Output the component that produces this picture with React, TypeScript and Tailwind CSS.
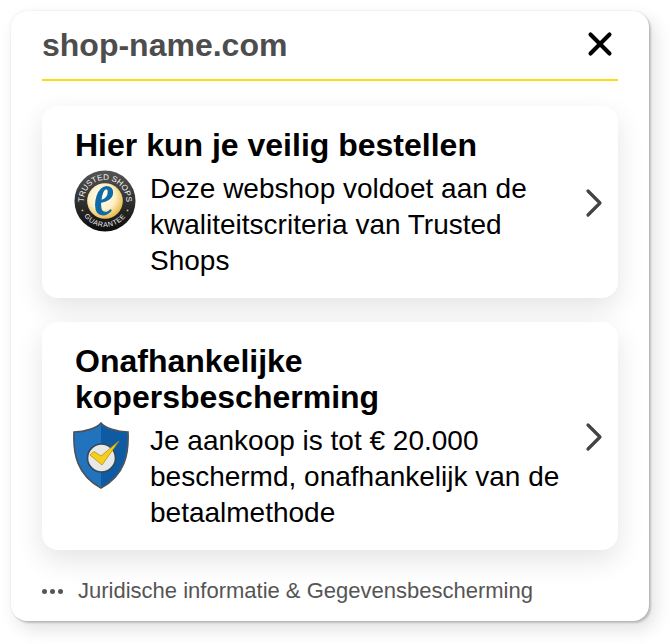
import { ChevronRight, X } from 'lucide-react'

function TrustedBadge() {
  return (
    <svg width="62" height="62" viewBox="0 0 66 66" className="ml-[1px] shrink-0">
      <defs>
        <radialGradient id="tsGold" cx="42%" cy="38%" r="68%">
          <stop offset="0%" stopColor="#ffffff" />
          <stop offset="55%" stopColor="#fdf0c4" />
          <stop offset="100%" stopColor="#e6ac30" />
        </radialGradient>
        <linearGradient id="tsRing" x1="0" y1="0" x2="0" y2="1">
          <stop offset="0%" stopColor="#555555" />
          <stop offset="100%" stopColor="#0c0c0c" />
        </linearGradient>
        <path id="tsTop" d="M 33 55.5 A 22.5 22.5 0 1 1 33.01 55.5" />
        <path id="tsBottom" d="M 33 5.5 A 27.5 27.5 0 1 0 33.01 5.5" />
      </defs>
      <circle cx="33" cy="33" r="32.5" fill="url(#tsRing)" />
      <circle cx="33" cy="33" r="19" fill="url(#tsGold)" />
      <text fill="#f4f4f4" fontSize="8.6" className="font-['Liberation_Sans',sans-serif]">
        <textPath href="#tsTop" startOffset="50%" textAnchor="middle">TRUSTED SHOPS</textPath>
      </text>
      <text fill="#f0f0f0" fontSize="7.4" letterSpacing="0.6" className="font-['Liberation_Sans',sans-serif]">
        <textPath href="#tsBottom" startOffset="50%" textAnchor="middle">GUARANTEE</textPath>
      </text>
      <circle cx="9" cy="43" r="1" fill="#e6c060" />
      <circle cx="57" cy="43" r="1" fill="#e6c060" />
      <text transform="translate(32 48) scale(1.1 1.5)" textAnchor="middle" fill="#0f6aa8" fontSize="44" fontStyle="italic" fontWeight="700" className="font-['Liberation_Serif',serif]">e</text>
    </svg>
  )
}

function ShieldBadge() {
  return (
    <svg width="56" height="67" viewBox="0 0 56 67" className="shrink-0">
      <path d="M28 1 C32 6 44 10 55 10 C56 32 52 53 28 66 C4 53 0 32 1 10 C12 10 24 6 28 1 Z" fill="#2273bd" stroke="#4d5258" strokeWidth="1.6" />
      <path d="M28 2 C32 7 44 10.5 54 10.5 C55 32 51 52 28 65 Z" fill="#0f5ba3" />
      <circle cx="28.5" cy="36" r="14" fill="#e8e8e8" stroke="#33485a" strokeWidth="1.6" />
      <path d="M17 33 L21 29.5 L28 34 L46 19 L29 43 Z" fill="#f5cf1c" stroke="#b78f10" strokeWidth="0.8" strokeLinejoin="round" />
    </svg>
  )
}

type CardProps = {
  title: string
  text: string
  icon: React.ReactNode
}

function Card({ title, text, icon }: CardProps) {
  return (
    <div className="flex items-center rounded-[16px] bg-white pt-[21px] pb-[19px] pl-[31px] shadow-[0_10px_28px_rgba(0,0,0,0.11)]">
      <div className="min-w-0 flex-1">
        <h2 className="pl-[2px] text-[32px] leading-[36px] font-bold text-black">{title}</h2>
        <div className="mt-[8px] flex items-start">
          <div className="mt-[-1px] w-[77px] shrink-0">{icon}</div>
          <p className="text-[28px] leading-[36px] text-black">{text}</p>
        </div>
      </div>
      <ChevronRight size={48} strokeWidth={1.6} className="shrink-0 text-[#444]" />
    </div>
  )
}

export default function App() {
  return (
    <div className="h-[644px] w-[672px] bg-white p-[11px] font-['Liberation_Sans',Arial,sans-serif]">
      <div className="flex h-[610px] w-[638px] flex-col rounded-[16px] bg-white px-[31px] shadow-[0_0_2px_rgba(0,0,0,0.12),2px_2px_2px_rgba(0,0,0,0.18),6px_8px_18px_rgba(0,0,0,0.12)]">
        <header className="flex h-[70px] items-center justify-between border-b-2 border-[#ffdc0f]">
          <span className="text-[32px] font-bold text-[#4d4d4d]">shop-name.com</span>
          <X size={38} strokeWidth={2.6} className="mr-[-1px] mt-[-3px] text-black" />
        </header>
        <div className="mt-[25px] flex flex-col gap-[24px]">
          <Card
            title="Hier kun je veilig bestellen"
            text="Deze webshop voldoet aan de kwaliteitscriteria van Trusted Shops"
            icon={<TrustedBadge />}
          />
          <Card
            title="Onafhankelijke kopersbescherming"
            text="Je aankoop is tot € 20.000 beschermd, onafhankelijk van de betaalmethode"
            icon={<ShieldBadge />}
          />
        </div>
        <footer className="mt-[27px] flex items-center gap-[15px] text-[22px] leading-[28px] text-[#555]">
          <span className="flex gap-[3px]">
            <i className="size-[5px] rounded-full bg-[#555]" />
            <i className="size-[5px] rounded-full bg-[#555]" />
            <i className="size-[5px] rounded-full bg-[#555]" />
          </span>
          <span>Juridische informatie &amp; Gegevensbescherming</span>
        </footer>
      </div>
    </div>
  )
}
